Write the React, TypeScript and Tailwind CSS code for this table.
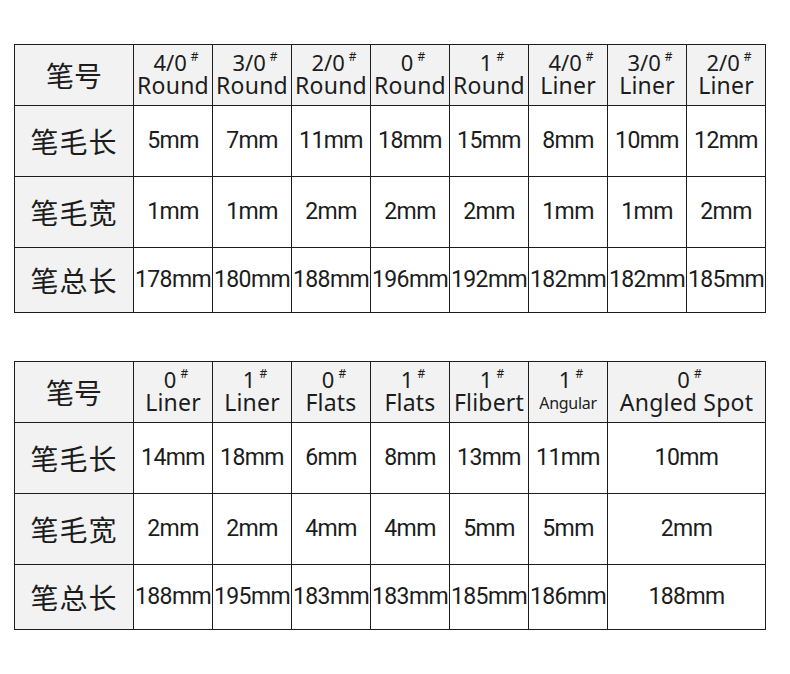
const table1 = {
  heads: [
    ["4/0", "Round"],
    ["3/0", "Round"],
    ["2/0", "Round"],
    ["0", "Round"],
    ["1", "Round"],
    ["4/0", "Liner"],
    ["3/0", "Liner"],
    ["2/0", "Liner"],
  ],
  rows: [
    { label: "笔毛长", values: ["5mm", "7mm", "11mm", "18mm", "15mm", "8mm", "10mm", "12mm"] },
    { label: "笔毛宽", values: ["1mm", "1mm", "2mm", "2mm", "2mm", "1mm", "1mm", "2mm"] },
    { label: "笔总长", values: ["178mm", "180mm", "188mm", "196mm", "192mm", "182mm", "182mm", "185mm"] },
  ],
};

const table2 = {
  heads: [
    ["0", "Liner"],
    ["1", "Liner"],
    ["0", "Flats"],
    ["1", "Flats"],
    ["1", "Flibert"],
    ["1", "Angular"],
    ["0", "Angled Spot"],
  ],
  rows: [
    { label: "笔毛长", values: ["14mm", "18mm", "6mm", "8mm", "13mm", "11mm", "10mm"] },
    { label: "笔毛宽", values: ["2mm", "2mm", "4mm", "4mm", "5mm", "5mm", "2mm"] },
    { label: "笔总长", values: ["188mm", "195mm", "183mm", "183mm", "185mm", "186mm", "188mm"] },
  ],
};

const headFont = { fontFamily: '"Noto Sans", "Open Sans", sans-serif' };
const cjkFont = { fontFamily: '"Noto Sans CJK SC", sans-serif' };
const valueFont = { fontFamily: 'Roboto, "Noto Sans CJK SC", sans-serif' };

function SpecTable({ data, wide }: { data: typeof table1; wide?: boolean }) {
  const cell = "border border-[#1c1c1c] p-0 text-center align-middle text-[#1c1c1c]";
  return (
    <table className="table-fixed border-collapse w-[752px]">
      <colgroup>
        <col className="w-[119px]" />
        {data.heads.map((h, i) => (
          <col key={i} className={wide && i === data.heads.length - 1 ? "w-[158px]" : "w-[79px]"} />
        ))}
      </colgroup>
      <tbody>
        <tr className="h-[61px] bg-[#f2f2f2]">
          <td className={`${cell} text-[28px]`} style={cjkFont}>
            笔号
          </td>
          {data.heads.map(([num, name], i) => (
            <td key={i} className={cell} style={headFont}>
              <div className="flex justify-center items-start h-[23px] pl-[6px] -mt-[2px]">
                <span className="text-[22px] leading-[24px]">{num}</span>
                <span className="text-[12px] leading-[12px] ml-[4px] mt-[1px]">#</span>
              </div>
              <div
                className={
                  name === "Angular"
                    ? "text-[16px] leading-[24px] pt-[1px] tracking-[-0.3px]"
                    : "text-[23px] leading-[25px] tracking-[0.2px] whitespace-nowrap"
                }
              >
                {name}
              </div>
            </td>
          ))}
        </tr>
        {data.rows.map((row, r) => (
          <tr key={row.label} className={r === 2 ? "h-[65px]" : "h-[71px]"}>
            <td className={`${cell} bg-[#f2f2f2] text-[28px] tracking-[1px]`} style={cjkFont}>
              {row.label}
            </td>
            {row.values.map((v, i) => (
              <td
                key={i}
                className={`${cell} bg-white text-[23px] tracking-[-0.6px] whitespace-nowrap`}
                style={valueFont}
              >
                {v}
              </td>
            ))}
          </tr>
        ))}
      </tbody>
    </table>
  );
}

export default function App() {
  return (
    <div className="w-[790px] h-[674px] bg-white pl-[14px] pt-[44px]">
      <SpecTable data={table1} />
      <div className="h-[48px]" />
      <SpecTable data={table2} wide />
    </div>
  );
}
